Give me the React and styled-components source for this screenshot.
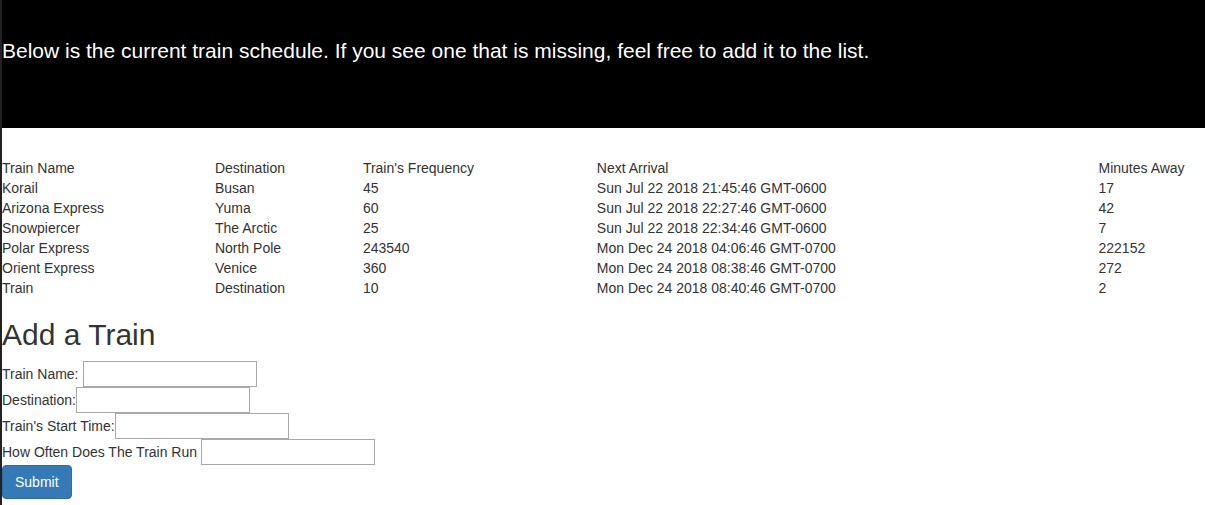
import React from "react";
import styled, { createGlobalStyle } from "styled-components";

const GlobalStyle = createGlobalStyle`
  *, *::before, *::after { box-sizing: border-box; }
  body {
    margin: 0;
    font-family: "Liberation Sans", Arial, sans-serif;
    font-size: 14px;
    line-height: 20px;
    color: #333;
    background: #fff;
  }
  #root { min-height: 100vh; display: flex; }
`;

const Page = styled.div`
  flex: 1;
  border-left: 2px solid #222;
`;

const Banner = styled.header`
  background: #000;
  color: #fff;
  padding: 35px 0 61px;
  margin-bottom: 30px;
`;

const BannerText = styled.p`
  margin: 0;
  font-size: 21px;
  line-height: 32px;
`;

const Schedule = styled.table`
  width: 100%;
  table-layout: fixed;
  border-collapse: collapse;
  border-spacing: 0;
`;

const Column = styled.col`
  width: ${({ $share }) => $share};
`;

const HeadCell = styled.th`
  padding: 0;
  text-align: left;
  font-weight: 400;
`;

const Cell = styled.td`
  padding: 0;
`;

const FormTitle = styled.h2`
  margin: 20px 0 10px;
  font-size: 30px;
  line-height: 33px;
  font-weight: 400;
`;

const Field = styled.div`
  display: flex;
  align-items: center;
  gap: ${({ $spaced }) => ($spaced ? "4px" : "0")};
`;

const TextInput = styled.input`
  width: 174px;
  height: 26px;
  padding: 2px;
  border: 1px solid #a9a9a9;
  border-radius: 0;
  background: #fff;
  color: inherit;
  font: inherit;
`;

const SubmitButton = styled.button`
  display: block;
  padding: 6px 12px;
  border: 1px solid #2e6da4;
  border-radius: 4px;
  background: #337ab7;
  color: #fff;
  font: inherit;
  cursor: pointer;
`;

const columns = [
  { label: "Train Name", share: "17.7%" },
  { label: "Destination", share: "12.3%" },
  { label: "Train's Frequency", share: "19.45%" },
  { label: "Next Arrival", share: "41.7%" },
  { label: "Minutes Away", share: "auto" },
];

const trains = [
  ["Korail", "Busan", "45", "Sun Jul 22 2018 21:45:46 GMT-0600", "17"],
  ["Arizona Express", "Yuma", "60", "Sun Jul 22 2018 22:27:46 GMT-0600", "42"],
  ["Snowpiercer", "The Arctic", "25", "Sun Jul 22 2018 22:34:46 GMT-0600", "7"],
  ["Polar Express", "North Pole", "243540", "Mon Dec 24 2018 04:06:46 GMT-0700", "222152"],
  ["Orient Express", "Venice", "360", "Mon Dec 24 2018 08:38:46 GMT-0700", "272"],
  ["Train", "Destination", "10", "Mon Dec 24 2018 08:40:46 GMT-0700", "2"],
];

const fields = [
  { id: "train-name", label: "Train Name:", spaced: true },
  { id: "destination", label: "Destination:", spaced: false },
  { id: "start-time", label: "Train's Start Time:", spaced: false },
  { id: "frequency", label: "How Often Does The Train Run", spaced: true },
];

export default function App() {
  return (
    <>
      <GlobalStyle />
      <Page>
        <Banner>
          <BannerText>
            Below is the current train schedule. If you see one that is missing, feel free to add it to the list.
          </BannerText>
        </Banner>
        <main>
          <Schedule>
            <colgroup>
              {columns.map((c) => (
                <Column key={c.label} $share={c.share} />
              ))}
            </colgroup>
            <thead>
              <tr>
                {columns.map((c) => (
                  <HeadCell key={c.label} scope="col">{c.label}</HeadCell>
                ))}
              </tr>
            </thead>
            <tbody>
              {trains.map((row) => (
                <tr key={row[0]}>
                  {row.map((value, i) => (
                    <Cell key={columns[i].label}>{value}</Cell>
                  ))}
                </tr>
              ))}
            </tbody>
          </Schedule>
          <FormTitle>Add a Train</FormTitle>
          <form onSubmit={(e) => e.preventDefault()}>
            {fields.map((f) => (
              <Field key={f.id} $spaced={f.spaced}>
                <label htmlFor={f.id}>{f.label}</label>
                <TextInput id={f.id} type="text" />
              </Field>
            ))}
            <SubmitButton type="submit">Submit</SubmitButton>
          </form>
        </main>
      </Page>
    </>
  );
}
